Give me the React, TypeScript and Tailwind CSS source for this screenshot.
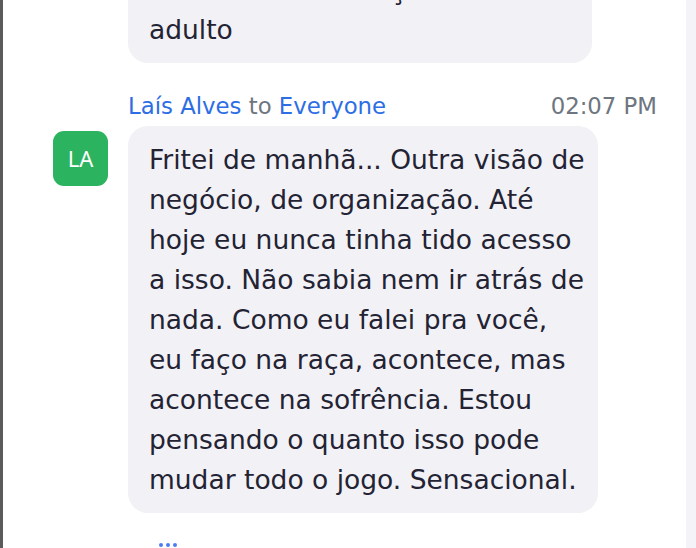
import React from "react";

const font = { fontFamily: '"DejaVu Sans", "Noto Sans", sans-serif' };

const prevLines = ["mudando de criança a ser um", "adulto"];

const lines = [
  "Fritei de manhã... Outra visão de",
  "negócio, de organização. Até",
  "hoje eu nunca tinha tido acesso",
  "a isso. Não sabia nem ir atrás de",
  "nada. Como eu falei pra você,",
  "eu faço na raça, acontece, mas",
  "acontece na sofrência. Estou",
  "pensando o quanto isso pode",
  "mudar todo o jogo. Sensacional.",
];

const Bubble: React.FC<{ rows: string[]; width: string }> = ({ rows, width }) => (
  <div className={`${width} rounded-[20px] bg-[#f1f1f6] pl-[21px] pr-4 pt-[14px] pb-[13px]`}>
    {rows.map((r, i) => (
      <div key={i} className="whitespace-nowrap text-[26.5px] leading-[40px] text-[#232333]">
        {r}
      </div>
    ))}
  </div>
);

export default function App() {
  return (
    <div className="flex h-[548px] w-[696px] overflow-hidden bg-white" style={font}>
      <div className="w-[3px] bg-[#5b5b5b]" />
      <div className="flex-1 overflow-hidden pl-[50px] pr-[29px]">
        <div className="mt-[-44px] flex flex-col">
          {/* previous message, cut by the top edge */}
          <div className="pl-[75px]">
            <Bubble rows={prevLines} width="w-[464px]" />
          </div>

          {/* header */}
          <div className="mt-[29px] flex items-center justify-between pl-[75px] text-[22.8px] leading-[28px]">
            <div>
              <span className="text-[#2d6ee5]">Laís Alves</span>
              <span className="text-[#6e7680]"> to </span>
              <span className="text-[#2d6ee5]">Everyone</span>
            </div>
            <span className="text-[#6e7680]">02:07 PM</span>
          </div>

          <div className="mt-[6px] flex gap-5">
            <div
              className="mt-[5px] flex h-[55px] w-[55px] shrink-0 items-center justify-center rounded-[11px] bg-[#2bb35f] text-[22px] text-white"
              style={{ fontFamily: '"Noto Sans", sans-serif' }}
            >
              LA
            </div>
            <Bubble rows={lines} width="w-[470px]" />
          </div>

          <div className="mt-[30px] flex gap-[3px] pl-[106px]">
            <span className="h-[4px] w-[4px] rounded-full bg-[#4d7ef0]" />
            <span className="h-[4px] w-[4px] rounded-full bg-[#4d7ef0]" />
            <span className="h-[4px] w-[4px] rounded-full bg-[#4d7ef0]" />
          </div>
        </div>
      </div>
      <div className="w-[10px] bg-[#f3f3f8]" />
    </div>
  );
}
